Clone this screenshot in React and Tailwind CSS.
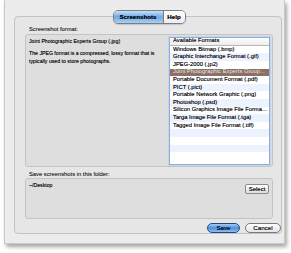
const formats = [
  'Windows Bitmap (.bmp)',
  'Graphic Interchange Format (.gif)',
  'JPEG-2000 (.jp2)',
  'Joint Photographic Experts Group...',
  'Portable Document Format (.pdf)',
  'PICT (.pict)',
  'Portable Network Graphic (.png)',
  'Photoshop (.psd)',
  'Silicon Graphics Image File Forma...',
  'Targa Image File Format (.tga)',
  'Tagged Image File Format (.tiff)',
  '',
  '',
  '',
  '',
]

const selectedIndex = 3

function FormatList() {
  return (
    <div className="w-[101px] h-[128px] mt-[2px] border border-[#8eaed6] bg-white shadow-[0_0_0_1px_#c3d6ee] flex flex-col overflow-hidden">
      <div className="h-[8px] shrink-0 px-[3px] flex items-center border-b border-[#b8b8b8] bg-gradient-to-b from-white to-[#ececec]">
        Available Formats
      </div>
      {formats.map((name, i) => {
        let rowClass = i % 2 === 0 ? 'bg-white' : 'bg-[#edf3fe]'
        if (i === selectedIndex) rowClass = 'bg-[#8d6f66] text-white'
        return (
          <div key={i} className={`h-[7.6px] shrink-0 px-[3px] flex items-center whitespace-nowrap overflow-hidden ${rowClass}`}>
            {name}
          </div>
        )
      })}
    </div>
  )
}

export default function App() {
  return (
    <div className="w-[291px] h-[253px] bg-white text-[5.8px] leading-none text-black overflow-hidden [text-shadow:0_0_0.3px_rgba(0,0,0,0.6)]" style={{ fontFamily: '"Liberation Sans", Arial, sans-serif' }}>
      <div className="ml-[4px] w-[281px] h-[244px] bg-[#ececec] border-x border-b border-[#c9c9c9] shadow-[2px_3px_4px_rgba(0,0,0,0.35)] flex flex-col pl-[9px] pr-[4px]">
        {/* tabs */}
        <div className="flex justify-center mt-[10px] h-[14px] relative z-10 pl-[4px]">
          <div className="flex rounded-[5px] border border-[#7d7d7d] overflow-hidden shadow-[0_1px_1px_rgba(0,0,0,0.15)] font-bold text-[6.2px]">
            <div className="w-[50px] flex items-center justify-center bg-gradient-to-b from-[#c6e0f8] via-[#6fa9e6] to-[#a9d0f5] border-r border-[#7d7d7d]">
              Screenshots
            </div>
            <div className="w-[21px] flex items-center justify-center bg-gradient-to-b from-white to-[#ececec]">
              Help
            </div>
          </div>
        </div>

        {/* tab box */}
        <div className="-mt-[8px] w-[268px] h-[218px] rounded-[4px] border border-[#c2c2c2] bg-[#e6e6e6] flex flex-col pl-[10px]">
          <div className="mt-[10px] pl-[4px] text-[#333]">Screenshot format:</div>
          <div className="mt-[1px] w-[248px] h-[134px] rounded-[3px] border border-[#c4c4c4] bg-[#dedede] flex pl-[3px] pr-[2px]">
            <div className="flex-1 pt-[4px] flex flex-col text-[5.2px] whitespace-nowrap">
              <div>Joint Photographic Experts Group (.jpg)</div>
              <div className="mt-[5px] leading-[8px]">
                The JPEG format is a compressed, lossy format that is
                <br />
                typically used to store photographs.
              </div>
            </div>
            <FormatList />
          </div>

          <div className="mt-[5px] pl-[4px] text-[#333]">Save screenshots in this folder:</div>
          <div className="mt-[1px] w-[248px] h-[41px] rounded-[3px] border border-[#c4c4c4] bg-[#dedede] flex pl-[3px] pr-[3px] pt-[4px]">
            <div className="flex-1 text-[5.2px]">~/Desktop</div>
            <div className="w-[24px] h-[10px] mt-[1px] rounded-[2px] border border-[#8a8a8a] bg-gradient-to-b from-white to-[#dcdcdc] flex items-center justify-center text-[6px]">
              Select
            </div>
          </div>

          <div className="flex justify-end gap-[5px] mt-[4px] text-[6.2px]">
            <div className="w-[33px] h-[10px] rounded-full border border-[#29467a] bg-gradient-to-b from-[#a9cdf3] via-[#4d8ee0] to-[#8cc0f5] flex items-center justify-center">
              Save
            </div>
            <div className="w-[36px] h-[10px] rounded-full border border-[#7a7a7a] bg-gradient-to-b from-white to-[#e4e4e4] flex items-center justify-center">
              Cancel
            </div>
          </div>
        </div>
      </div>
    </div>
  )
}
